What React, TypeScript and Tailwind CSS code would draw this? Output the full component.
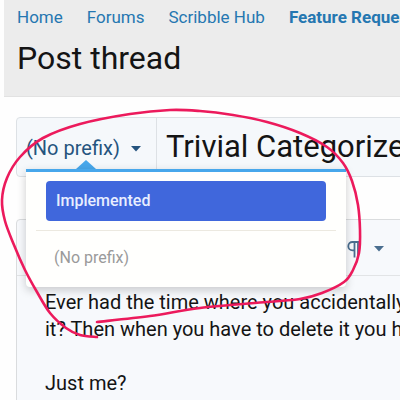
import React from "react";

const pts: [number, number][] = [
  [97, 337], [80, 335], [66, 328], [50, 313], [37, 292], [25, 270], [14, 245],
  [5, 221], [2, 200], [7, 178], [20, 157], [43, 138], [80, 124], [130, 114],
  [170, 110], [200, 111], [233, 115], [267, 122], [300, 133], [327, 147],
  [343, 163], [352, 181], [358, 205], [360, 230], [359, 253], [353, 270],
  [344, 282], [322, 293], [300, 299], [267, 302], [200, 308], [150, 316], [97, 322],
];

function catmull(p: [number, number][]) {
  let d = `M${p[0][0]},${p[0][1]}`;
  for (let i = 0; i < p.length - 1; i++) {
    const p0 = p[i - 1] || p[i];
    const p1 = p[i];
    const p2 = p[i + 1];
    const p3 = p[i + 2] || p2;
    const c1x = p1[0] + (p2[0] - p0[0]) / 6;
    const c1y = p1[1] + (p2[1] - p0[1]) / 6;
    const c2x = p2[0] - (p3[0] - p1[0]) / 6;
    const c2y = p2[1] - (p3[1] - p1[1]) / 6;
    d += ` C${c1x.toFixed(1)},${c1y.toFixed(1)} ${c2x.toFixed(1)},${c2y.toFixed(1)} ${p2[0]},${p2[1]}`;
  }
  return d;
}

function Chevron() {
  return (
    <svg width="6" height="9" viewBox="0 0 6 9" className="mx-[12px]">
      <path d="M1 1 L4.5 4.5 L1 8" fill="none" stroke="#8a8a8a" strokeWidth="1.4" />
    </svg>
  );
}

function Caret({ color }: { color: string }) {
  return (
    <svg width="10" height="6" viewBox="0 0 10 6">
      <path d="M0 0 L10 0 L5 5.5 Z" fill={color} />
    </svg>
  );
}

function Pilcrow() {
  return (
    <svg width="13" height="18" viewBox="0 0 13 18">
      <path d="M7.5 2 H5.5 a4.2 4.2 0 0 0 0 8.4 H7.5" fill="none" stroke="#4a6e8f" strokeWidth="1.8" strokeLinejoin="round" />
      <path d="M7.5 1.2 V17.5 M11 1.2 V17.5 M6 2 H12.5" fill="none" stroke="#4a6e8f" strokeWidth="1.8" />
    </svg>
  );
}

export default function App() {
  return (
    <div className="relative w-[400px] h-[400px] overflow-hidden bg-[#fefefe] font-['Roboto',sans-serif]">
      <div className="ml-[4px] h-[97px] bg-[#ececec] border-b border-[#e2e2e2] pl-[13px] pt-[6px]">
        <div className="flex items-center whitespace-nowrap text-[17px] leading-[22px] text-[#2577b1]">
          <span>Home</span>
          <Chevron />
          <span>Forums</span>
          <Chevron />
          <span>Scribble Hub</span>
          <Chevron />
          <span className="font-bold">Feature Requests</span>
        </div>
        <div className="mt-[12px] text-[32px] leading-[36px] text-[#141414]">Post thread</div>
      </div>

      <div className="pl-[16px] pt-[20px]">
        <div className="flex h-[60px] w-[420px] rounded-[4px] border border-[#dde1e5] bg-[#f5f8fb]">
          <div className="flex w-[140px] items-center border-r border-[#dde1e5] pl-[9px] pt-[1px]">
            <span className="text-[20px] text-[#25547e] whitespace-nowrap">(No prefix)</span>
            <span className="ml-[11px] mt-[2px]"><Caret color="#25547e" /></span>
          </div>
          <div className="flex items-center pl-[9px] pt-[1px] text-[31px] text-[#141414] whitespace-nowrap">
            Trivial Categorizer
          </div>
        </div>

        <div className="mt-[42px] w-[420px] h-[200px] rounded-[4px] border border-[#dadcde] bg-[#f7f9fc]">
          <div className="flex h-[56px] items-center justify-end pr-[51px] pt-[2px] border-b border-[#e2e4e6]">
            <Pilcrow />
            <span className="ml-[14px]"><Caret color="#4a6e8f" /></span>
          </div>
          <div className="pl-[28px] pt-[13px] text-[20px] leading-[27px] text-[#141414] whitespace-nowrap">
            <div>Ever had the time where you accidentally</div>
            <div>it? Then when you have to delete it you have</div>
            <div>&nbsp;</div>
            <div>Just me?</div>
          </div>
        </div>
      </div>

      <div className="absolute left-[26px] top-[160px] w-[320px]">
        <div className="ml-[50px] h-0 w-0 border-x-[10px] border-b-[9px] border-x-transparent border-b-[#47a7eb]" />
        <div className="h-[118px] rounded-b-[4px] border-t-[3px] border-[#47a7eb] bg-[#fffffd] shadow-[0_3px_10px_rgba(0,0,0,0.2)] px-[10px] pt-[9px]">
          <div className="mx-[10px] flex h-[40px] items-center rounded-[4px] bg-[#4067dc] pl-[10px] text-[16px] font-medium text-[#e8eeff]">
            Implemented
          </div>
          <div className="mt-[9px] h-px bg-[#ece9e0]" />
          <div className="mt-[15px] pl-[18px] text-[16px] text-[#9a9a9a]">(No prefix)</div>
        </div>
      </div>

      <svg className="absolute left-0 top-0 pointer-events-none" width="400" height="400" viewBox="0 0 400 400">
        <path d={catmull(pts)} fill="none" stroke="#ec1a5c" strokeWidth="2.6" strokeLinecap="round" strokeLinejoin="round" />
      </svg>
    </div>
  );
}
